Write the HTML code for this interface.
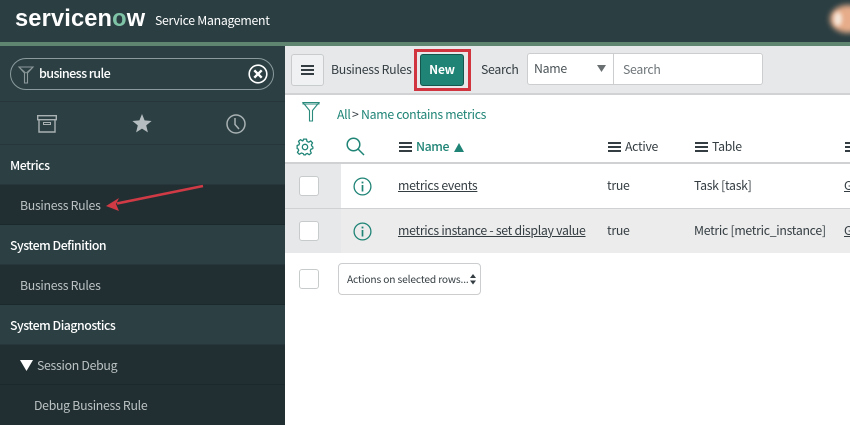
<!DOCTYPE html>
<html><head><meta charset="utf-8"><style>
html,body{margin:0;padding:0}
body{width:850px;height:425px;overflow:hidden;position:relative;background:#fff;font-family:"Noto Sans CJK JP","Liberation Sans",sans-serif;font-size:12.3px;letter-spacing:-.29px;color:#343d42}
div,a,span.a{position:absolute;box-sizing:border-box;white-space:nowrap}
.t{line-height:20px;height:20px}
.g{color:#1f8476}
.row{left:0;width:285px;height:40px}
.h{background:#2c4044;border-bottom:1px solid #26363a}
.s{background:#212f33;border-bottom:1px solid #1c292c}
.side-h{color:#fff;font-weight:500;left:10px;letter-spacing:-.46px}
.side-s{color:#bcc3c4;left:20px}
.cb{left:299px;width:20px;height:20px;background:#fff;border:1px solid #c8cbcc;border-radius:3px}
.menu{width:13px;height:10px;border-top:2px solid #343d42;border-bottom:2px solid #343d42}
.menu:after{content:"";position:absolute;left:0;right:0;top:2px;height:2px;background:#343d42}
svg{position:absolute;overflow:visible}
</style></head><body>

<div style="left:0;top:0;width:850px;height:42px;background:#2b3e42"></div>
<div style="left:0;top:42px;width:850px;height:4px;background:#5f8570"></div>
<div style="left:15px;top:5px;height:28px;line-height:28px;font-family:'Liberation Sans',sans-serif;font-weight:700;font-size:24px;color:#fff;letter-spacing:.15px;transform-origin:left center;transform:scaleX(.985)">servicen<span style="color:#7fc3a6">o</span>w</div>
<div class="t" style="left:155px;top:10px;color:#fff">Service Management</div>
<div style="left:830px;top:5px;width:36px;height:28px;border-radius:50%;background:#e7ad8a;filter:blur(3px)"></div>
<div style="left:834px;top:12px;width:8px;height:14px;border-radius:50%;background:#f5e8dc;filter:blur(2px)"></div>

<div style="left:0;top:46px;width:285px;height:379px;background:#2c4044"></div>
<div style="left:10px;top:58px;width:264px;height:32px;border:1px solid #8b9a9c;border-radius:16px"></div>
<svg style="left:18px;top:65px" width="16" height="20" viewBox="0 0 16 20" fill="none" stroke="#8d999b" stroke-width="1.100"><path d="M1 2H15L9.500 8V18H6.500V8Z"/><path d="M1 2L8 8L15 2" stroke-width=".8"/></svg>
<div class="t" style="left:39px;top:63px;color:#fff;font-weight:500;font-size:12.6px;letter-spacing:-.62px">business rule</div>
<svg style="left:248px;top:64px" width="20" height="20" viewBox="0 0 20 20" fill="none" stroke="#fff"><circle cx="10" cy="10" r="8.800" stroke-width="1.600"/><path d="M6.300 6.300L13.700 13.700M13.700 6.300L6.300 13.700" stroke-width="2.400"/></svg>
<div style="left:0;top:101px;width:285px;height:1px;background:#26363a"></div>
<svg style="left:37px;top:115px" width="20" height="18" viewBox="0 0 20 18" fill="none" stroke="#a9b1b3" stroke-width="1.400"><rect x=".7" y=".7" width="18.600" height="4"/><path d="M2 5V17H18V5"/><rect x="6.500" y="7.500" width="7" height="2" stroke-width="1"/></svg>
<svg style="left:132px;top:114px" width="20" height="19" viewBox="0 0 20 19" fill="#b6bdc0"><path d="M10 0L12.600 6.400L19.600 7L14.200 11.400L15.900 18.400L10 14.600L4.100 18.400L5.800 11.400L.4 7L7.400 6.400Z"/></svg>
<svg style="left:226px;top:114px" width="20" height="20" viewBox="0 0 20 20" fill="none" stroke="#a9b1b3" stroke-width="1.500"><circle cx="10" cy="10" r="9"/><path d="M9 4V10.500L13 15"/></svg>
<div style="left:0;top:144px;width:285px;height:1px;background:#26363a"></div>

<div class="row h" style="top:145px"></div>
<div class="t side-h" style="top:155px">Metrics</div>
<div class="row s" style="top:185px"></div>
<div class="t side-s" style="top:195px">Business Rules</div>
<div class="row h" style="top:225px"></div>
<div class="t side-h" style="top:235px">System Definition</div>
<div class="row s" style="top:265px"></div>
<div class="t side-s" style="top:275px">Business Rules</div>
<div class="row h" style="top:305px"></div>
<div class="t side-h" style="top:315px">System Diagnostics</div>
<div class="row s" style="top:345px"></div>
<svg style="left:20px;top:360px" width="13" height="11"><path d="M0 0H13L6.500 11Z" fill="#fff"/></svg>
<div class="t side-s" style="left:37px;top:355px">Session Debug</div>
<div class="row s" style="top:385px;border:0"></div>
<div class="t side-s" style="left:34px;top:395px">Debug Business Rule</div>

<svg style="left:0;top:0" width="285" height="425"><path d="M203 186L117 203.500" stroke="#cf3a45" stroke-width="2.600" fill="none"/><path d="M106 206L119 198L116 204L119 211Z" fill="#cf3a45"/></svg>

<div style="left:285px;top:46px;width:565px;height:49px;background:#e6e8ea;border-bottom:2px solid #d0d2d3"></div>
<div style="left:291px;top:54px;width:33px;height:32px;background:#f0f1f2;border:1px solid #c9cccd;border-radius:3px"></div>
<div class="menu" style="left:301px;top:65px"></div>
<div class="t" style="left:331px;top:59px">Business Rules</div>
<div style="left:414px;top:49px;width:57px;height:42px;border:3px solid #d0353f"></div>
<div class="t" style="left:420px;top:54px;width:44px;height:32px;line-height:30px;text-align:center;background:#1f8476;border:1px solid #15554d;border-radius:3px;color:#fff;font-weight:700;font-size:12px;letter-spacing:-.2px">New</div>
<div class="t" style="left:481px;top:59px">Search</div>
<div style="left:527px;top:53px;width:236px;height:32px;background:#fff;border:1px solid #cbcdce;border-radius:3px"></div>
<div style="left:613px;top:53px;width:1px;height:32px;background:#cbcdce"></div>
<div class="t" style="left:534px;top:58px;color:#4b5357">Name</div>
<svg style="left:597px;top:65px" width="10" height="8"><path d="M0 0H9L4.500 7Z" fill="#6a6f72"/></svg>
<div class="t" style="left:623px;top:59px;color:#6e7579">Search</div>

<svg style="left:302px;top:101px" width="18" height="22" viewBox="0 0 18 22" fill="none" stroke="#2a8a7c" stroke-width="1.100"><path d="M1 1.500H17L10.500 9.500V20H7.500V9.500Z"/><path d="M1 1.500V3H17V1.500" stroke-width="1"/></svg>
<div class="t g" style="left:337px;top:104px">All</div>
<div class="t" style="left:352px;top:104px">&gt;</div>
<div class="t g" style="left:361px;top:104px">Name contains metrics</div>

<svg style="left:296px;top:138px" width="18" height="18" viewBox="0 0 24 24" fill="none" stroke="#1f8476" stroke-width="1.700" stroke-linejoin="round"><circle cx="12" cy="12" r="3.600"/><path d="M10 1.500H14L14.700 4.600L17 5.600L19.700 3.900L22.100 6.600L20.400 9.200L21.300 11L22.500 12L22.500 14L19.900 15L19 17.200L20.400 20L17.600 22.300L15 20.600L13.300 21.300L12.600 22.500H10.600L9.700 20.900L7.200 20L4.400 21.700L1.900 19.200L3.600 16.500L2.700 14.400L1.500 14V10L3.900 9.200L4.700 7.200L3.300 4.500L6 2.200L8.600 3.900L9.500 3.500Z"/></svg>
<svg style="left:346px;top:137px" width="19" height="19" viewBox="0 0 19 19" fill="none" stroke="#1f8476" stroke-width="1.500"><circle cx="7.500" cy="7.500" r="6.300"/><path d="M12 12L18 18"/></svg>
<div class="menu" style="left:399px;top:142px"></div>
<div class="t g" style="left:416px;top:136px;font-weight:500;letter-spacing:-.4px">Name</div>
<svg style="left:454px;top:143px" width="11" height="9"><path d="M0 9H10L5 0Z" fill="#1f8476"/></svg>
<div class="menu" style="left:608px;top:142px"></div>
<div class="t" style="left:625px;top:136px">Active</div>
<div class="menu" style="left:695px;top:142px"></div>
<div class="t" style="left:712px;top:136px">Table</div>
<div class="menu" style="left:845px;top:142px"></div>
<div style="left:285px;top:162px;width:565px;height:2px;background:#cfd1d2"></div>

<div style="left:285px;top:164px;width:56px;height:89px;background:#e6e8ea"></div>
<div style="left:341px;top:209px;width:509px;height:44px;background:#ececec"></div>
<div style="left:285px;top:208px;width:565px;height:1px;background:#cfd1d2"></div>
<div class="cb" style="top:176px"></div>
<div class="cb" style="top:221px"></div>
<div class="cb" style="top:269px"></div>

<svg style="left:353px;top:177px" width="19" height="19" viewBox="0 0 19 19" fill="none" stroke="#1f8476"><circle cx="9.500" cy="9.500" r="8.400" stroke-width="1.300"/><path d="M9.500 8V14.500" stroke-width="1.700"/><path d="M9.500 4.600V6.400" stroke-width="1.800"/></svg>
<svg style="left:353px;top:222px" width="19" height="19" viewBox="0 0 19 19" fill="none" stroke="#1f8476"><circle cx="9.500" cy="9.500" r="8.400" stroke-width="1.300"/><path d="M9.500 8V14.500" stroke-width="1.700"/><path d="M9.500 4.600V6.400" stroke-width="1.800"/></svg>

<div class="t" style="left:398px;top:175px;text-decoration:underline">metrics events</div>
<div class="t" style="left:607px;top:175px">true</div>
<div class="t" style="left:694px;top:175px">Task [task]</div>
<div class="t" style="left:844px;top:175px;text-decoration:underline">G</div>
<div class="t" style="left:398px;top:220px;text-decoration:underline">metrics instance - set display value</div>
<div class="t" style="left:607px;top:220px">true</div>
<div class="t" style="left:694px;top:220px">Metric [metric_instance]</div>
<div class="t" style="left:844px;top:220px;text-decoration:underline">G</div>

<div style="left:338px;top:263px;width:143px;height:32px;background:#fff;border:1px solid #cbcdce;border-radius:4px"></div>
<div class="t" style="left:347px;top:269px;font-size:10.2px;letter-spacing:-.14px">Actions on selected rows...</div>
<svg style="left:470px;top:274px" width="7" height="11"><path d="M0 4H6L3 0ZM0 6.500H6L3 10.500Z" fill="#343d42"/></svg>
</body></html>
